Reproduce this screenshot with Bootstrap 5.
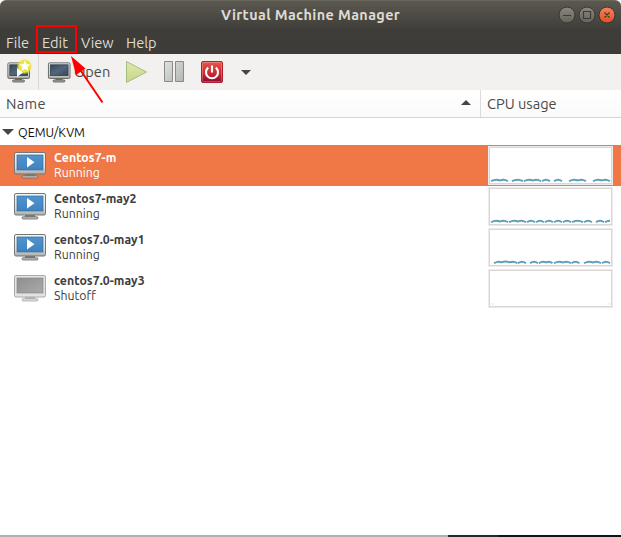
<!DOCTYPE html>
<html lang="en">
<head>
<meta charset="utf-8">
<meta name="viewport" content="width=device-width, initial-scale=1">
<title>Virtual Machine Manager</title>
<link href="https://cdn.jsdelivr.net/npm/bootstrap@5.3.0/dist/css/bootstrap.min.css" rel="stylesheet">
<style>
body{width:621px;height:537px;overflow:hidden;background:#b0b0b0;font-family:Ubuntu,"Noto Sans",sans-serif;font-size:14.6px;line-height:20px;color:#4a4a4a}
svg{display:block;flex:none}
.vmm{height:535px;background:#fff}
.chrome{height:54px;background:linear-gradient(#5b5850 0,#59564e 3px,#3e3d39 29px,#3d3c38);border-top:1px solid #69665d;border-radius:6px 6px 0 0}
.titlebar{height:29px}
.title{left:221px;top:4px;font-weight:700;font-size:14.4px;letter-spacing:.38px;color:#dfdbd2;white-space:nowrap}
.winctl{right:4px;top:5px}
.menus{height:24px;color:#dfdbd2;padding-left:6px}
.menus span{white-space:nowrap;line-height:26px}
.m1{width:36px}.m2{width:39px}.m3{width:45px}
.tools{height:36px;background:#f2f1f0}
.tool-sep{width:1px;height:36px;background:#dcdad8}
.heads{height:28px;background:linear-gradient(#fff,#fafafa);border-bottom:1px solid #d5d4d3}
.h-name{width:481px;border-right:1px solid #dcdbda;padding-left:6px;padding-right:9px}
.h-name span{letter-spacing:.35px}
.h-cpu{padding-left:6px}
.group-row{height:27px;color:#111;font-size:12.5px;padding-left:2px}
.vm{height:41px;padding-left:14px;font-size:12.3px;line-height:15px;color:#3c3c3c}
.vm .vm-icon{width:40px}
.vm .vm-text{width:434px;padding-bottom:1px}
.vm .fw-bold{letter-spacing:.05px}
.vm.active{background:#f07746;color:#fff}
.graph{width:125px;height:39px;border:1px solid #efeaea}
.graph svg{border:1px solid #dad6d6;background:#fff}
.strip{height:2px;padding-left:448px;background:#b0b0b0}
.strip div{height:2px;background:linear-gradient(90deg,#25282b 0,#25282b 50px,#101418 51px)}
.callout{left:0;top:0;pointer-events:none}
</style>
<script src="https://cdn.jsdelivr.net/npm/bootstrap@5.3.0/dist/js/bootstrap.bundle.min.js"></script>
</head>
<body>
<svg width="0" height="0" class="position-absolute">
<defs>
<linearGradient id="frame" x2="0" y2="1"><stop stop-color="#f5f5f3"/><stop offset=".7" stop-color="#dededb"/><stop offset="1" stop-color="#a9a9a5"/></linearGradient>
<linearGradient id="blue" x2="0" y2="1"><stop stop-color="#5094cd"/><stop offset="1" stop-color="#3f82bf"/></linearGradient>
<linearGradient id="slate" x2="1" y2="1"><stop stop-color="#34475b"/><stop offset=".5" stop-color="#53667a"/><stop offset="1" stop-color="#34455a"/></linearGradient>
<linearGradient id="grey" x2="1" y2="1"><stop stop-color="#8f8f8f"/><stop offset="1" stop-color="#a9a9a9"/></linearGradient>
<linearGradient id="green" x2="0" y2="1"><stop stop-color="#dfe8ab"/><stop offset="1" stop-color="#c5d68b"/></linearGradient>
<linearGradient id="bar" x2="1" y2="1"><stop stop-color="#dfe1de"/><stop offset="1" stop-color="#b3b6b2"/></linearGradient>
<linearGradient id="red" x2="0" y2="1"><stop stop-color="#e6584c"/><stop offset=".6" stop-color="#cb2630"/><stop offset="1" stop-color="#800b30"/></linearGradient>
<linearGradient id="knob" x2="0" y2="1"><stop stop-color="#8b8881"/><stop offset="1" stop-color="#64625b"/></linearGradient>
<linearGradient id="close" x2="0" y2="1"><stop stop-color="#f5825c"/><stop offset="1" stop-color="#e2501f"/></linearGradient>
<radialGradient id="glow"><stop offset=".7" stop-color="#ebe534"/><stop offset="1" stop-color="#ebe534" stop-opacity="0"/></radialGradient>
<symbol id="vm-on" viewBox="0 0 32 28"><path d="M11 22h10v2h-10z" fill="#777"/><rect x="8" y="23.7" width="16" height="2.3" rx="1.1" fill="#b8b8b5" stroke="#6e6e6b" stroke-width=".8"/><rect x=".5" y=".5" width="31" height="21.5" rx="1.5" fill="url(#frame)" stroke="#777773"/><rect x="3" y="3" width="26" height="15" fill="url(#blue)" stroke="#316da4" stroke-width=".7"/><path d="M13 5l7.5 5.3L13 15.5z" fill="#fff"/></symbol>
<symbol id="vm-off" viewBox="0 0 32 28"><path d="M11 22h10v2h-10z" fill="#bbb"/><rect x="8" y="23.7" width="16" height="2.3" rx="1.1" fill="#ddd" stroke="#aaa" stroke-width=".8"/><rect x=".5" y=".5" width="31" height="21.5" rx="1.5" fill="#e3e3e3" stroke="#aaa"/><rect x="3" y="3" width="26" height="15" fill="url(#grey)" stroke="#888" stroke-width=".7"/></symbol>
<symbol id="monitor" viewBox="0 0 24 21"><path d="M8 16h7v3H8z" fill="#777"/><rect x="5.5" y="18" width="12" height="2" rx="1" fill="#aaa" stroke="#555550" stroke-width=".8"/><rect x=".9" y=".9" width="21.6" height="15.5" rx="1.2" fill="url(#frame)" stroke="#656560"/><rect x="2.8" y="2.8" width="17.8" height="10.6" fill="url(#slate)" stroke="#2d3c4b" stroke-width=".8"/></symbol>
<path id="b1" d="M0 2.2q4-2.8 8 0"/>
<path id="b1w" d="M0 2.2q5.500-3 11 0"/>
<path id="b2" d="M0 2.200q4.500-2.600 9-.7q4-1.800 8 .7"/>
<path id="b3" d="M0 2.200q4-2.400 7.500-.9q4-1.600 8 0q4-1.500 8 .9"/>
</defs>
</svg>

<div class="vmm d-flex flex-column">
 <header class="chrome">
  <div class="titlebar position-relative">
   <div class="title position-absolute">Virtual Machine Manager</div>
   <svg class="winctl position-absolute" width="60" height="18" viewBox="0 0 60 18">
    <g stroke="#383733"><circle cx="10" cy="9" r="8" fill="url(#knob)"/><circle cx="30" cy="9" r="8" fill="url(#knob)"/><circle cx="50" cy="9" r="8" fill="url(#close)"/></g>
    <path d="M6 9.500h8M26.500 5.500h7v7h-7zM47.500 6.500l5 5m0-5l-5 5" fill="none" stroke="#3c3b37" stroke-width="1.200"/>
   </svg>
  </div>
  <nav class="menus d-flex"><span class="m1">File</span><span class="m2">Edit</span><span class="m3">View</span><span>Help</span></nav>
 </header>

 <div class="tools d-flex align-items-center">
  <svg width="38" height="36" viewBox="0 0 38 36"><use href="#monitor" x="7" y="8" width="24" height="21"/><circle cx="24.500" cy="12.500" r="8" fill="url(#glow)"/><path d="M17 14v9l6-4.500z" fill="#fff"/><path d="M25 6.500l1.600 3.400 3.700.5-2.700 2.600.7 3.700-3.300-1.800-3.400 1.800.7-3.700-2.700-2.600 3.800-.5z" fill="#fff"/></svg>
  <div class="tool-sep"></div>
  <svg width="35" height="36" viewBox="0 0 35 36"><use href="#monitor" x="8.500" y="8" width="24" height="21"/></svg>
  <span>Open</span>
  <svg class="ms-auto" width="136" height="36" viewBox="120 0 136 36">
   <path d="M126.500 7.500v21L146.500 18z" fill="url(#green)" stroke="#a2bf80"/>
   <path d="M164.500 7.500h8v20h-8zM175.500 7.500h8v20h-8z" fill="url(#bar)" stroke="#888b87"/>
   <rect x="201.500" y="7.500" width="21" height="21" rx="1.500" fill="url(#red)" stroke="#b31e2d"/><rect x="202.500" y="8.500" width="19" height="19" rx="1" fill="none" stroke="#fff" stroke-opacity=".25"/>
   <path d="M208.200 13.600a6 6 0 1 0 7.600 0M212 11.500v7" fill="none" stroke="#fff" stroke-width="2.100"/>
   <path d="M241 16h10l-5 5z" fill="#464646"/>
  </svg>
  <div style="width:365px"></div>
 </div>

 <div class="heads d-flex">
  <div class="h-name d-flex justify-content-between align-items-center"><span>Name</span><svg width="10" height="7" viewBox="0 0 10 7"><path d="M0 5h10L5 0z" fill="#464646"/></svg></div>
  <div class="h-cpu d-flex align-items-center"><span>CPU usage</span></div>
 </div>

 <main class="flex-grow-1">
  <div class="group-row d-flex align-items-center"><svg width="16" height="8" viewBox="0 0 16 8"><path d="M0 1h12L6 7z" fill="#464646"/></svg><span>QEMU/KVM</span></div>

  <div class="vm active d-flex align-items-center">
   <svg class="vm-icon" width="40" height="28"><use href="#vm-on" width="32" height="28"/></svg>
   <div class="vm-text"><div class="fw-bold">Centos7-m</div><div>Running</div></div>
   <div class="graph"><svg width="123" height="37" viewBox="490 0 121 35"><g fill="none" stroke="#5f9fb9" stroke-width="1.900" transform="translate(0 31)"><use href="#b2" x="491"/><use href="#b1w" x="512"/><use href="#b2" x="524"/><use href="#b1" x="542"/><use href="#b1" x="554"/><use href="#b2" x="569"/><use href="#b2" x="593"/></g></svg></div>
  </div>
  <div class="vm d-flex align-items-center">
   <svg class="vm-icon" width="40" height="28"><use href="#vm-on" width="32" height="28"/></svg>
   <div class="vm-text"><div class="fw-bold">Centos7-may2</div><div>Running</div></div>
   <div class="graph"><svg width="123" height="37" viewBox="490 0 121 35"><g fill="none" stroke="#5f9fb9" stroke-width="1.900" transform="translate(0 31)"><use href="#b2" x="491"/><use href="#b2" x="509"/><use href="#b1" x="527"/><use href="#b1" x="536"/><use href="#b1" x="545"/><use href="#b1" x="554"/><use href="#b1" x="563"/><use href="#b1w" x="572"/><use href="#b1" x="584"/><use href="#b1" x="596"/><path d="M605 2.200q2-1.400 5-1.400"/></g></svg></div>
  </div>
  <div class="vm d-flex align-items-center">
   <svg class="vm-icon" width="40" height="28"><use href="#vm-on" width="32" height="28"/></svg>
   <div class="vm-text"><div class="fw-bold">centos7.0-may1</div><div>Running</div></div>
   <div class="graph"><svg width="123" height="37" viewBox="490 0 121 35"><g fill="none" stroke="#5f9fb9" stroke-width="1.900" transform="translate(0 31)"><use href="#b3" x="494"/><use href="#b1" x="518"/><use href="#b1" x="530"/><path d="M539 2.200q3.500-2.600 7-.8q3.500-1.600 6.500.8"/><use href="#b2" x="554"/><use href="#b1" x="571.500"/><use href="#b2" x="584"/><use href="#b1" x="602"/></g></svg></div>
  </div>
  <div class="vm d-flex align-items-center">
   <svg class="vm-icon" width="40" height="28"><use href="#vm-off" width="32" height="28"/></svg>
   <div class="vm-text"><div class="fw-bold">centos7.0-may3</div><div>Shutoff</div></div>
   <div class="graph"><svg width="123" height="37" viewBox="490 0 121 35"><path d="M491 33h3M607 33h3" stroke="#ddebef"/></svg></div>
  </div>
 </main>
</div>
<div class="strip"><div></div></div>

<svg class="callout position-absolute" width="621" height="120" viewBox="0 0 621 120"><rect x="37" y="26" width="39" height="26" fill="none" stroke="#f00" stroke-width="2"/><path d="M102.500 102.500L79 68" stroke="#f00" stroke-width="2"/><path d="M71 56l14.500 12.500L76 75z" fill="#f00"/></svg>
</body>
</html>
